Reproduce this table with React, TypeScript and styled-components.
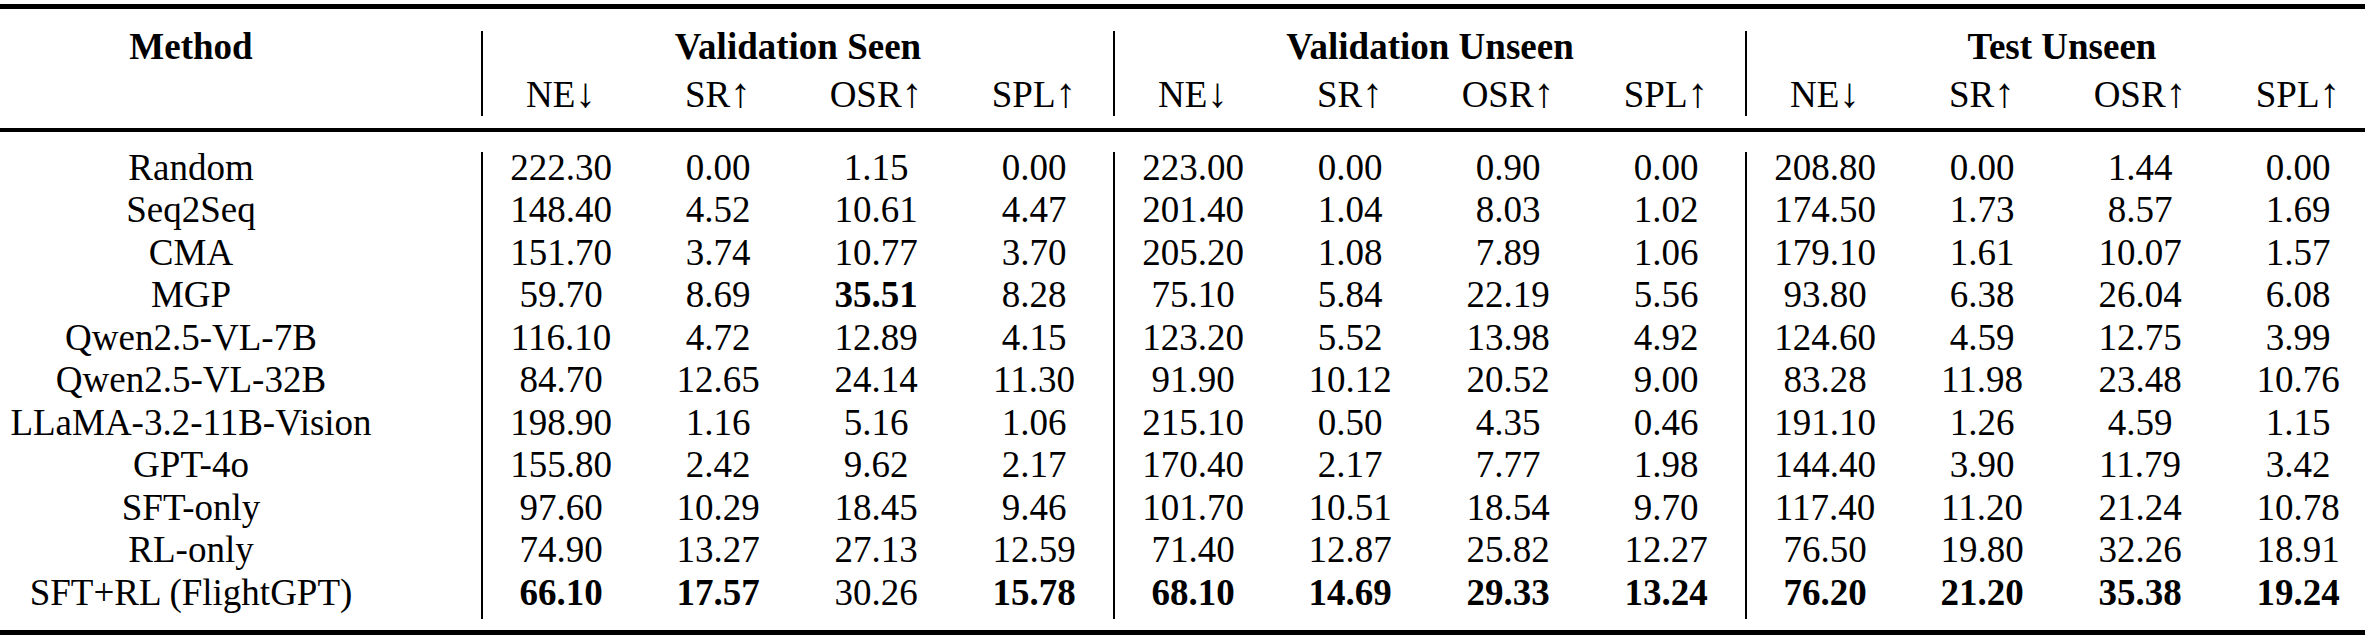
import * as React from "react";
import styled, {createGlobalStyle} from "styled-components";

const GlobalStyle = createGlobalStyle`
    html, body {
        margin: 0;
        padding: 0;
        background: #ffffff;
        overflow: hidden;
    }
`;

const Table = styled.div`
    width: 2378px;
    padding-top: 4px;
    font-family: "Liberation Serif", "Times New Roman", serif;
    font-size: 37px;
    color: #000;
`;

const Rule = styled.div<{$thickness: number}>`
    height: ${({$thickness}) => $thickness}px;
    background: #000;
`;

const Header = styled.div`
    padding: 22px 0 12px;
`;

const Body = styled.div`
    padding: 20px 0 11px;
`;

const GroupRow = styled.div`
    display: grid;
    grid-template-columns: 481px repeat(3, 632px);
`;

const Row = styled.div`
    display: grid;
    grid-template-columns: 481px repeat(12, 158px);
`;

const Cell = styled.div<{$sep?: boolean; $bold?: boolean; $tall?: boolean}>`
    box-sizing: border-box;
    text-align: center;
    white-space: nowrap;
    line-height: ${({$tall}) => ($tall ? "42px" : "32px")};
    padding-bottom: ${({$tall}) => ($tall ? "0" : "10.5px")};
    border-left: ${({$sep}) => ($sep ? "2px solid #000" : "none")};
    font-weight: ${({$bold}) => ($bold ? 700 : 400)};
`;

const MethodCell = styled(Cell)`
    padding-right: 99px;
`;

const Arrow = styled.span`
    font-size: 1.12em;
    line-height: 0;
`;

const groups = ["Validation Seen", "Validation Unseen", "Test Unseen"];
const metrics: [string, string][] = [["NE", "\u2193"], ["SR", "\u2191"], ["OSR", "\u2191"], ["SPL", "\u2191"]];

type Entry = [string, boolean?];

const rows: {name: string; values: Entry[]}[] = [
    {name: "Random", values: [["222.30"], ["0.00"], ["1.15"], ["0.00"], ["223.00"], ["0.00"], ["0.90"], ["0.00"], ["208.80"], ["0.00"], ["1.44"], ["0.00"]]},
    {name: "Seq2Seq", values: [["148.40"], ["4.52"], ["10.61"], ["4.47"], ["201.40"], ["1.04"], ["8.03"], ["1.02"], ["174.50"], ["1.73"], ["8.57"], ["1.69"]]},
    {name: "CMA", values: [["151.70"], ["3.74"], ["10.77"], ["3.70"], ["205.20"], ["1.08"], ["7.89"], ["1.06"], ["179.10"], ["1.61"], ["10.07"], ["1.57"]]},
    {name: "MGP", values: [["59.70"], ["8.69"], ["35.51", true], ["8.28"], ["75.10"], ["5.84"], ["22.19"], ["5.56"], ["93.80"], ["6.38"], ["26.04"], ["6.08"]]},
    {name: "Qwen2.5-VL-7B", values: [["116.10"], ["4.72"], ["12.89"], ["4.15"], ["123.20"], ["5.52"], ["13.98"], ["4.92"], ["124.60"], ["4.59"], ["12.75"], ["3.99"]]},
    {name: "Qwen2.5-VL-32B", values: [["84.70"], ["12.65"], ["24.14"], ["11.30"], ["91.90"], ["10.12"], ["20.52"], ["9.00"], ["83.28"], ["11.98"], ["23.48"], ["10.76"]]},
    {name: "LLaMA-3.2-11B-Vision", values: [["198.90"], ["1.16"], ["5.16"], ["1.06"], ["215.10"], ["0.50"], ["4.35"], ["0.46"], ["191.10"], ["1.26"], ["4.59"], ["1.15"]]},
    {name: "GPT-4o", values: [["155.80"], ["2.42"], ["9.62"], ["2.17"], ["170.40"], ["2.17"], ["7.77"], ["1.98"], ["144.40"], ["3.90"], ["11.79"], ["3.42"]]},
    {name: "SFT-only", values: [["97.60"], ["10.29"], ["18.45"], ["9.46"], ["101.70"], ["10.51"], ["18.54"], ["9.70"], ["117.40"], ["11.20"], ["21.24"], ["10.78"]]},
    {name: "RL-only", values: [["74.90"], ["13.27"], ["27.13"], ["12.59"], ["71.40"], ["12.87"], ["25.82"], ["12.27"], ["76.50"], ["19.80"], ["32.26"], ["18.91"]]},
    {name: "SFT+RL (FlightGPT)", values: [["66.10", true], ["17.57", true], ["30.26"], ["15.78", true], ["68.10", true], ["14.69", true], ["29.33", true], ["13.24", true], ["76.20", true], ["21.20", true], ["35.38", true], ["19.24", true]]},
];

const App: React.FC = (): JSX.Element => {
    return (
        <>
            <GlobalStyle />
            <Table>
                <Rule $thickness={5} />
                <Header>
                    <GroupRow>
                        <MethodCell $bold>Method</MethodCell>
                        {groups.map((g) => (
                            <Cell key={g} $sep $bold>{g}</Cell>
                        ))}
                    </GroupRow>
                    <Row>
                        <MethodCell $tall />
                        {groups.map((g) =>
                            metrics.map(([m, arrow], i) => (
                                <Cell key={g + m} $sep={i === 0} $tall>
                                    {m}<Arrow>{arrow}</Arrow>
                                </Cell>
                            ))
                        )}
                    </Row>
                </Header>
                <Rule $thickness={4} />
                <Body>
                    {rows.map((r) => (
                        <Row key={r.name}>
                            <MethodCell>{r.name}</MethodCell>
                            {r.values.map(([v, bold], i) => (
                                <Cell key={i} $sep={i % 4 === 0} $bold={bold}>{v}</Cell>
                            ))}
                        </Row>
                    ))}
                </Body>
                <Rule $thickness={5} />
            </Table>
        </>
    );
};

export default App;
